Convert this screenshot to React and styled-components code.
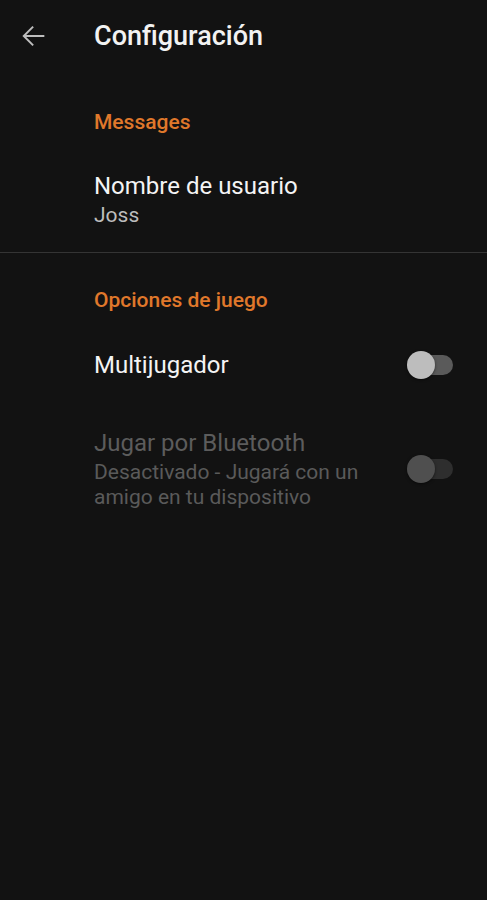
import React from "react";
import styled, { createGlobalStyle } from "styled-components";

const Global = createGlobalStyle`
  html, body { margin: 0; padding: 0; background: #121212; }
  body { font-family: Roboto, "Noto Sans", sans-serif; -webkit-font-smoothing: antialiased; }
`;

const Screen = styled.div`
  width: 487px;
  min-height: 900px;
  background: #121212;
  color: #fff;
`;

const Toolbar = styled.div`
  height: 72px;
  display: flex;
  align-items: center;
  padding-left: 16px;
`;

const BackButton = styled.button`
  width: 34px;
  height: 34px;
  display: flex;
  align-items: center;
  justify-content: center;
  background: none;
  border: none;
  padding: 0;
  margin-right: 44px;
  color: #bdbdbd;
`;

const Title = styled.h1`
  margin: 0;
  font-size: 27px;
  font-weight: 500;
  color: #f2f2f2;
`;

const Section = styled.section`
  padding: ${(p) => p.$top}px 0 ${(p) => p.$bottom}px 94px;
  border-bottom: ${(p) => (p.$divider ? "1px solid #343434" : "none")};
`;

const SectionHeader = styled.div`
  color: #e0782b;
  font-size: 21px;
  font-weight: 500;
  line-height: 26px;
`;

const Row = styled.div`
  display: flex;
  align-items: center;
  justify-content: space-between;
  padding-right: 34px;
  margin-top: ${(p) => p.$mt}px;
`;

const RowText = styled.div`
  display: flex;
  flex-direction: column;
`;

const RowTitle = styled.div`
  font-size: 24px;
  line-height: 30px;
  color: ${(p) => (p.$disabled ? "#5c5c5c" : "#f4f4f4")};
`;

const RowSummary = styled.div`
  margin-top: 2px;
  font-size: 21px;
  line-height: 25px;
  color: ${(p) => (p.$disabled ? "#5a5a5a" : "#bdbdbd")};
  max-width: 290px;
`;

const SwitchTrack = styled.div`
  position: relative;
  width: 44px;
  height: 20px;
  border-radius: 10px;
  background: ${(p) => (p.$disabled ? "#2e2e2e" : "#5a5a5a")};
  flex-shrink: 0;
`;

const SwitchThumb = styled.div`
  position: absolute;
  left: -2px;
  top: -4px;
  width: 28px;
  height: 28px;
  border-radius: 50%;
  background: ${(p) => (p.$disabled ? "#4f4f4f" : "#bdbdbd")};
  box-shadow: 0 1px 3px rgba(0, 0, 0, 0.5);
`;

const Switch = ({ disabled }) => (
  <SwitchTrack $disabled={disabled}>
    <SwitchThumb $disabled={disabled} />
  </SwitchTrack>
);

export default function App() {
  return (
    <>
      <Global />
      <Screen>
        <Toolbar>
          <BackButton aria-label="back">
            <svg width="34" height="34" viewBox="0 0 24 24" fill="currentColor">
              <path d="M20 11.3H7.2l5.4-5.4L11.6 4.9 4.5 12l7.1 7.1 1-1-5.4-5.4H20v-1.4z" />
            </svg>
          </BackButton>
          <Title>Configuración</Title>
        </Toolbar>

        <Section $top={37} $bottom={24} $divider>
          <SectionHeader>Messages</SectionHeader>
          <Row $mt={36}>
            <RowText>
              <RowTitle>Nombre de usuario</RowTitle>
              <RowSummary>Joss</RowSummary>
            </RowText>
          </Row>
        </Section>

        <Section $top={34} $bottom={0}>
          <SectionHeader>Opciones de juego</SectionHeader>
          <Row $mt={37}>
            <RowText>
              <RowTitle>Multijugador</RowTitle>
            </RowText>
            <Switch />
          </Row>
          <Row $mt={48}>
            <RowText>
              <RowTitle $disabled>Jugar por Bluetooth</RowTitle>
              <RowSummary $disabled>
                Desactivado - Jugará con un amigo en tu dispositivo
              </RowSummary>
            </RowText>
            <Switch disabled />
          </Row>
        </Section>
      </Screen>
    </>
  );
}
